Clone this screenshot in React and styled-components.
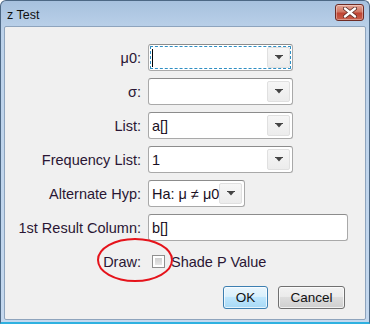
import React from 'react'
import styled, { createGlobalStyle } from 'styled-components'

const Global = createGlobalStyle`
  html, body {
    margin: 0;
    padding: 0;
    background: #ffffff;
    overflow: hidden;
  }
  * { box-sizing: border-box; }
`

const Window = styled.div`
  position: relative;
  width: 370px;
  height: 324px;
  display: flex;
  flex-direction: column;
  border: 1px solid #4d6885;
  border-bottom: 2px solid #2fb1e0;
  border-radius: 6px 6px 0 0;
  background: linear-gradient(#a7c1de, #bcd2ea 30px, #c4d8ee);
  padding: 0 3px 2px 3px;
  font-family: "Liberation Sans", Arial, sans-serif;
`

const TitleBar = styled.div`
  height: 25px;
  flex: none;
  display: flex;
  align-items: center;
  justify-content: space-between;
  padding: 0 2px 0 3px;
`

const Title = styled.span`
  font-size: 12.5px;
  color: #111;
  margin-top: 2px;
`

const CloseButton = styled.div`
  width: 29px;
  height: 17px;
  margin-top: -2px;
  border: 1px solid #6e2b24;
  border-radius: 3px;
  background: linear-gradient(#e5a596, #d07764 45%, #bf4433 55%, #c9604c);
  box-shadow: inset 0 0 0 1px rgba(255, 255, 255, 0.35);
  display: flex;
  align-items: center;
  justify-content: center;
`

const Client = styled.div`
  flex: 1;
  border: 1px solid #8ea4bd;
  border-radius: 2px;
  background: #f0f0f0;
  padding: 17px 20px 0 0;
  display: flex;
  flex-direction: column;
`

const Form = styled.div`
  display: grid;
  grid-template-columns: 136px auto;
  grid-auto-rows: 27px;
  column-gap: 7px;
  row-gap: 7px;
  align-items: center;
`

const Label = styled.label`
  justify-self: end;
  font-size: 14.5px;
  color: #2a1634;
  white-space: nowrap;
`

const Field = styled.div`
  position: relative;
  width: ${p => p.$width}px;
  height: ${p => p.$height || 27}px;
  background: #fff;
  border: 1px solid #a9a9a9;
  border-top-color: #8c8c8c;
  border-radius: 3px;
  display: flex;
  align-items: center;
  padding-left: 3px;
  font-size: 14.5px;
  color: #1a1024;
  outline: ${p => (p.$focused ? '1px dashed #2f8fc4' : 'none')};
  outline-offset: -3px;
`

const Value = styled.span`
  flex: 1;
  white-space: nowrap;
`

const Caret = styled.span`
  display: inline-block;
  width: 1px;
  height: 18px;
  background: #000;
  vertical-align: middle;
`

const DropButton = styled.div`
  align-self: stretch;
  width: 23px;
  margin: 2px 2px 2px 0;
  background: linear-gradient(#f6f6f6, #ececec);
  border: 1px solid #e0e0e0;
  border-radius: 2px;
  display: flex;
  align-items: center;
  justify-content: center;
`

const CheckRow = styled.div`
  display: flex;
  align-items: center;
  gap: 6px;
  padding-left: 4px;
  font-size: 14.5px;
  color: #2a1634;
`

const CheckBox = styled.span`
  width: 13px;
  height: 13px;
  border: 1px solid #8f8f8f;
  background: #fff;
  padding: 2px;
  display: inline-flex;
  &::after {
    content: '';
    flex: 1;
    background: linear-gradient(#cfcfcf, #e6e6e6);
  }
`

const Buttons = styled.div`
  display: flex;
  justify-content: flex-end;
  gap: 10px;
  margin-top: 11px;
`

const Button = styled.button`
  width: ${p => p.$width}px;
  height: 23px;
  border-radius: 3px;
  border: 1px solid ${p => (p.$primary ? '#3c7fb1' : '#707070')};
  background: ${p =>
    p.$primary
      ? 'linear-gradient(#eaf6fd, #d9f0fc 45%, #bee6fd 50%, #a7d9f5)'
      : 'linear-gradient(#f2f2f2, #ebebeb 45%, #dddddd 50%, #cfcfcf)'};
  box-shadow: inset 0 0 0 1px rgba(255, 255, 255, 0.7);
  font-family: "Liberation Sans", Arial, sans-serif;
  font-size: 13.5px;
  color: #111;
  padding: 0;
`

const Annotation = styled.svg`
  position: absolute;
  left: 95px;
  top: 236px;
  pointer-events: none;
`

const Arrow = () => (
  <svg width="8" height="5" viewBox="0 0 8 5">
    <path d="M0 0h8v1H0z M1 1h6L4 4.5z" fill="#444" />
  </svg>
)

const Combo = ({ width, value, focused }) => (
  <Field $width={width} $focused={focused}>
    <Value>{focused ? <Caret /> : value}</Value>
    <DropButton>
      <Arrow />
    </DropButton>
  </Field>
)

export default function App() {
  return (
    <>
      <Global />
      <Window>
        <TitleBar>
          <Title>z Test</Title>
          <CloseButton>
            <svg width="14" height="11" viewBox="0 0 14 11">
              <path
                d="M2 1.5L12 9.5M12 1.5L2 9.5"
                stroke="#5a2a24"
                strokeWidth="4"
                strokeLinecap="round"
              />
              <path
                d="M2 1.5L12 9.5M12 1.5L2 9.5"
                stroke="#fff"
                strokeWidth="2.4"
                strokeLinecap="round"
              />
            </svg>
          </CloseButton>
        </TitleBar>
        <Client>
          <Form>
            <Label>μ0:</Label>
            <Combo width={145} focused />
            <Label>σ:</Label>
            <Combo width={145} value="" />
            <Label>List:</Label>
            <Combo width={145} value="a[]" />
            <Label>Frequency List:</Label>
            <Combo width={145} value="1" />
            <Label>Alternate Hyp:</Label>
            <Combo width={97} value="Ha: μ ≠ μ0" />
            <Label>1st Result Column:</Label>
            <Field $width={200}>
              <Value>b[]</Value>
            </Field>
            <Label>Draw:</Label>
            <CheckRow>
              <CheckBox />
              Shade P Value
            </CheckRow>
          </Form>
          <Buttons>
            <Button $primary $width={45}>OK</Button>
            <Button $width={67}>Cancel</Button>
          </Buttons>
        </Client>
        <Annotation width="80" height="48" viewBox="0 0 80 48">
          <ellipse cx="39" cy="23" rx="37" ry="21" fill="none" stroke="#e5131b" strokeWidth="2" />
        </Annotation>
      </Window>
    </>
  )
}
